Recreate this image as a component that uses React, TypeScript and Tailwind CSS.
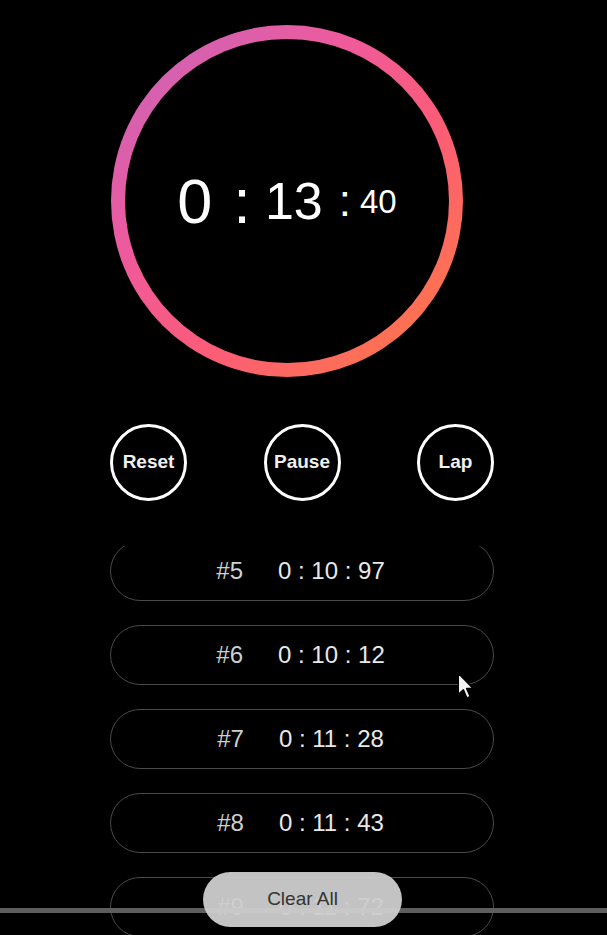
import { useState } from "react";

type Lap = { id: number; time: string };

const initialLaps: Lap[] = [
  { id: 5, time: "0 : 10 : 97" },
  { id: 6, time: "0 : 10 : 12" },
  { id: 7, time: "0 : 11 : 28" },
  { id: 8, time: "0 : 11 : 43" },
  { id: 9, time: "0 : 11 : 72" },
];

export default function App() {
  const [laps, setLaps] = useState<Lap[]>(initialLaps);
  const [running, setRunning] = useState(true);

  return (
    <div className="relative h-[935px] w-full overflow-hidden bg-black font-['Liberation_Sans',Arial,sans-serif] text-white">
      <div className="ml-[110px] w-[384px] pt-[25px]">
        {/* timer ring */}
        <div className="ml-px h-[352px] w-[352px] rounded-full bg-[linear-gradient(135deg,#c366be_0%,#ef5a9c_35%,#fb5c78_60%,#ff7d3c_100%)] p-[14px]">
          <div className="flex h-full w-full items-center justify-center rounded-full bg-black leading-none">
            <span className="text-[63px]">0</span>
            <span className="ml-[21px] text-[63px]">:</span>
            <span className="ml-[14px] text-[52px]">13</span>
            <span className="ml-[16px] text-[44px]">:</span>
            <span className="ml-[9px] text-[33px]">40</span>
          </div>
        </div>

        {/* controls */}
        <div className="mt-[47px] flex items-center justify-between">
          <CircleButton label="Reset" onClick={() => setLaps([])} />
          <CircleButton label={running ? "Pause" : "Start"} onClick={() => setRunning((r) => !r)} />
          <CircleButton label="Lap" />
        </div>

        {/* laps */}
        <div className="mt-[45px] h-[390px] overflow-hidden">
          <div className="-mt-[5px] flex flex-col gap-[24px]">
            {laps.map((lap) => (
              <div
                key={lap.id}
                className="flex h-[60px] shrink-0 items-center justify-center gap-[35px] rounded-full border-[1.5px] border-[#4a4a4a] pr-[3px] text-[24px]"
              >
                <span className="text-[#cfcfcf]">#{lap.id}</span>
                <span className="text-[#e8e8e8]">{lap.time}</span>
              </div>
            ))}
          </div>
        </div>
      </div>

      {/* player scrub bar */}
      <div className="pointer-events-none absolute left-0 right-0 top-[908px] h-[5px] bg-[#5e5e5e]" />

      <button
        type="button"
        onClick={() => setLaps([])}
        className="absolute bottom-[8px] left-[203px] h-[55px] w-[199px] rounded-full bg-[rgba(206,206,206,0.95)] text-[19px] text-[#333]"
      >
        Clear All
      </button>

      {/* mouse cursor */}
      <svg
        className="pointer-events-none absolute left-[457px] top-[672px]"
        width="18"
        height="28"
        viewBox="0 0 13 20"
      >
        <path
          d="M1 1 L1 16 L4.6 12.6 L7.2 18.6 L9.4 17.6 L6.9 11.8 L11.6 11.8 Z"
          fill="#f2f2f2"
          stroke="#000"
          strokeWidth="0.9"
          strokeLinejoin="round"
        />
      </svg>
    </div>
  );
}

function CircleButton({ label, onClick }: { label: string; onClick?: () => void }) {
  return (
    <button
      type="button"
      onClick={onClick}
      className="flex h-[77px] w-[77px] items-center justify-center rounded-full border-[3px] border-white text-[19px] font-bold text-[#f0f0f0]"
    >
      {label}
    </button>
  );
}
